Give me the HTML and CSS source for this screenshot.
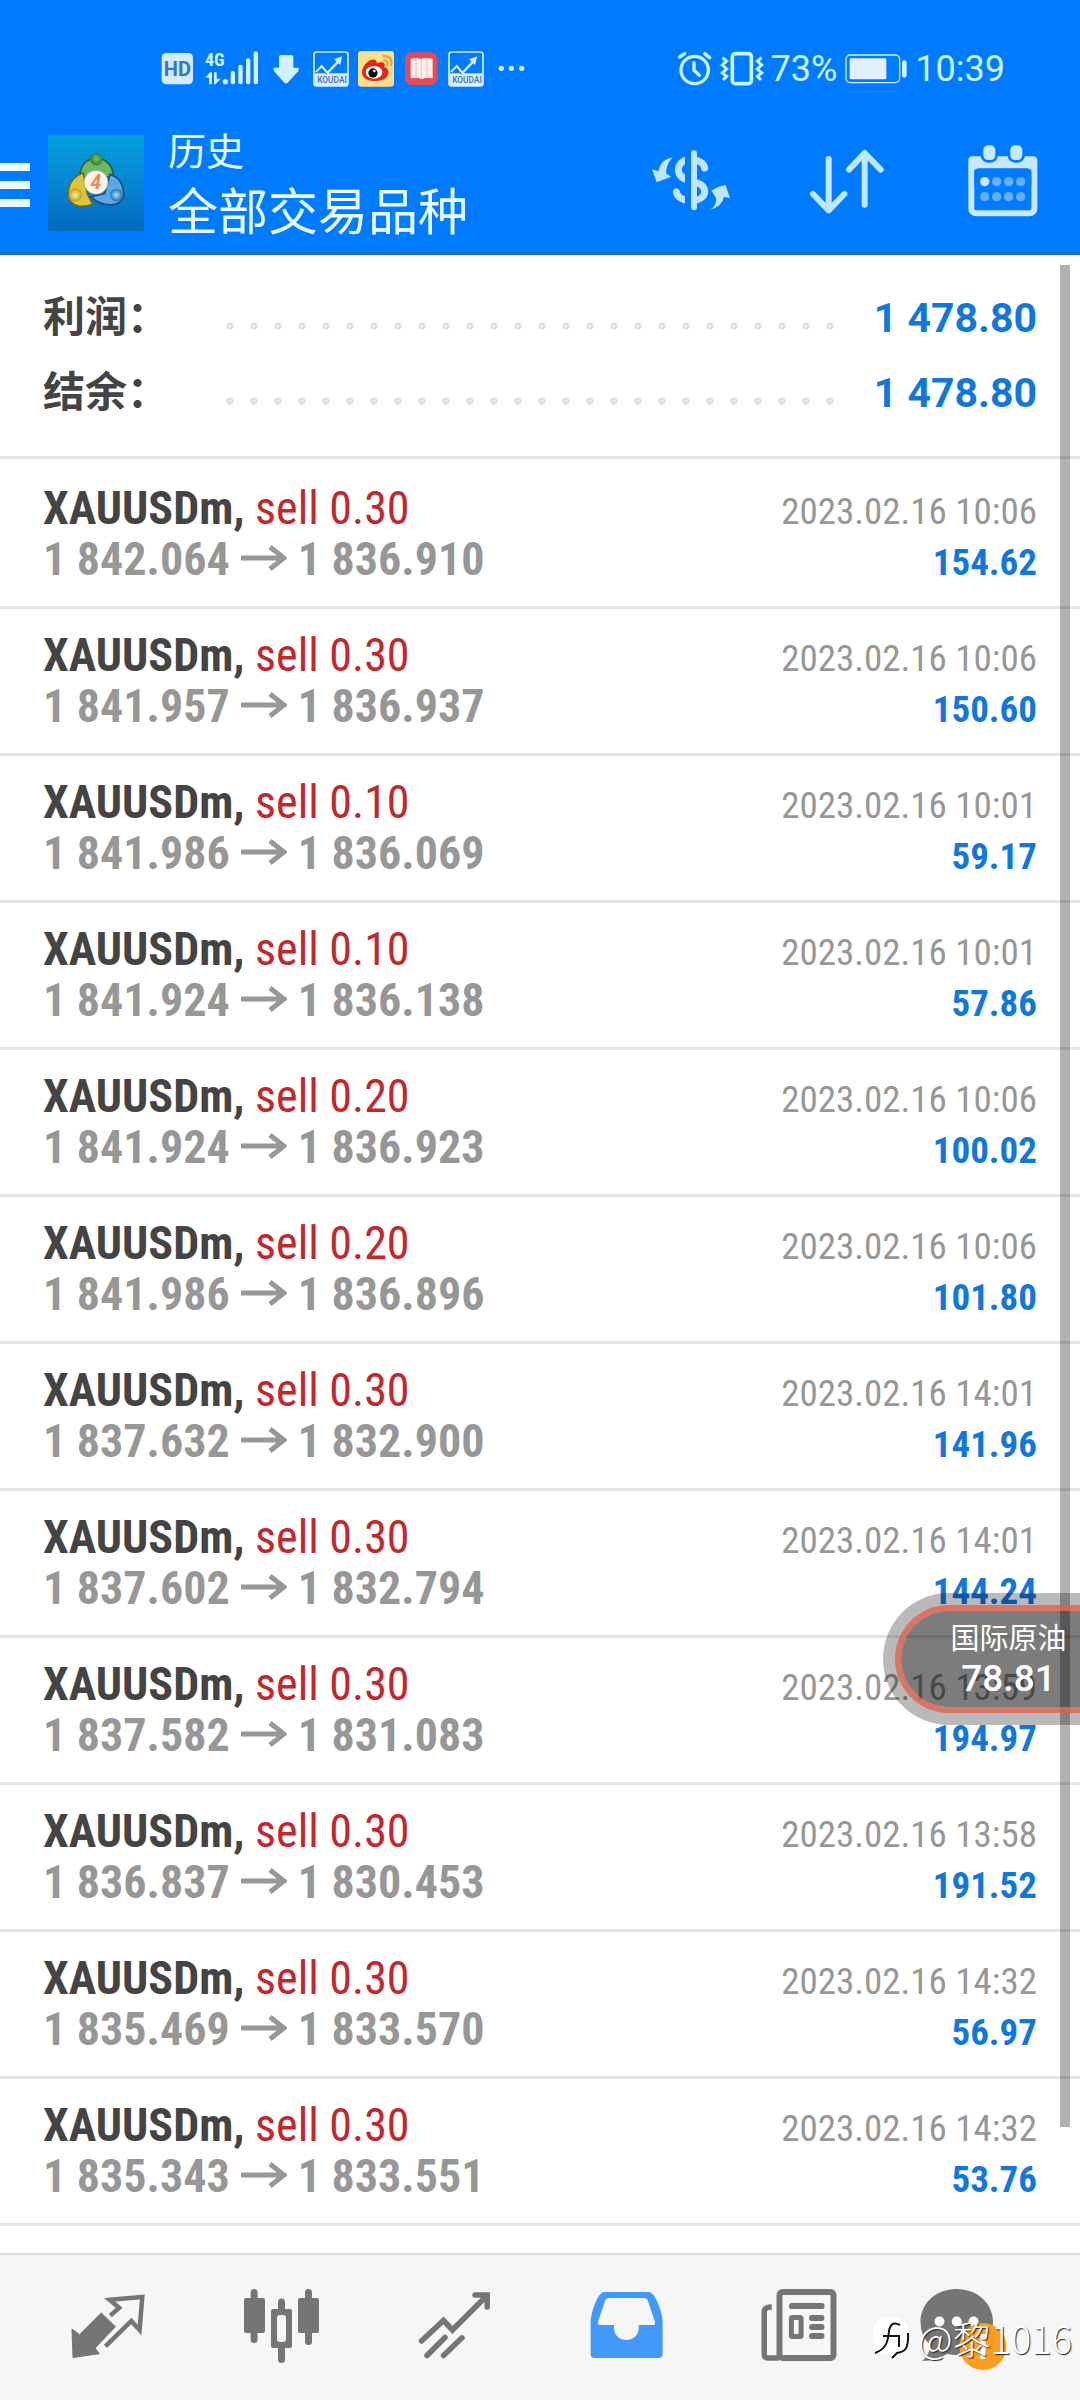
FILE: index.html
```html
<!DOCTYPE html>
<html lang="zh-CN">
<head>
<meta charset="utf-8">
<meta name="viewport" content="width=device-width, initial-scale=1">
<title>历史</title>
<link rel="stylesheet" href="styles.css">
</head>
<body>
<svg class="defs" aria-hidden="true">
  <symbol id="arrow" viewBox="0 0 46 34"><path d="M0 17H43M29 6L43 17L29 28" fill="none" stroke="currentColor" stroke-width="5"/></symbol>
  <symbol id="koudai" viewBox="519 62 108 108">
    <rect x="522" y="65" width="102" height="102" rx="8" fill="#007bff" stroke="#d8f1ff" stroke-width="5"/>
    <path d="M524 129H622V160Q622 167 615 167H531Q524 167 524 160Z" fill="#d8f1ff"/>
    <path d="M528 126L545 108L562 128L600 88" fill="none" stroke="#d8f1ff" stroke-width="7"/>
    <path d="M528 129L545 114L560 133" fill="none" stroke="#3d5f92" stroke-width="3"/>
    <path d="M607 78L600 104L582 87Z" fill="#d8f1ff"/>
    <text x="576" y="157" text-anchor="middle" class="koudai-text">KOUDAI</text>
  </symbol>
</svg>
<div class="app">
  <header class="header">
    <div class="status">
      <div class="status-left">
        <svg width="36" height="36" viewBox="60 62 108 108"><rect x="65" y="68" width="94" height="94" rx="14" fill="#d3ecff"/><text x="112" y="137" text-anchor="middle" class="hd-text">HD</text></svg>
        <svg width="56" height="36" viewBox="195 62 168 108" fill="#d3f0ff"><text x="195" y="107" class="net-text">4G</text><path d="M196 142L210 126H216V162H207V142ZM222 126H230V145H243L226 162H222Z"/><circle cx="256" cy="154" r="8"/><rect x="272" y="122" width="13" height="40" rx="6"/><rect x="295" y="103" width="13" height="59" rx="6"/><rect x="318" y="84" width="13" height="78" rx="6"/><rect x="341" y="63" width="13" height="99" rx="6"/></svg>
        <svg width="34" height="36" viewBox="390 62 102 108"><path d="M423 74H454Q460 74 460 80V112H476V121L443 157Q438 161 433 157L401 121V112H417V80Q417 74 423 74Z" fill="#d3f0ff"/></svg>
        <svg width="36" height="36"><use href="#koudai"/></svg>
        <svg width="36" height="36" viewBox="654 62 108 108"><rect x="654" y="62" width="108" height="107" rx="10" fill="#fbe08a"/><path d="M666 127C666 104 690 84 704 88C712 91 710 99 710 99C728 92 738 98 733 110C752 116 750 140 728 148C700 158 668 150 666 127Z" fill="#e1261d"/><ellipse cx="702" cy="126" rx="25" ry="19" fill="#fff"/><circle cx="699" cy="128" r="14" fill="#111"/><circle cx="703" cy="122" r="4" fill="#fff"/><path d="M730 90Q746 90 742 107M728 77Q760 76 753 107" fill="none" stroke="#e8a33c" stroke-width="7"/></svg>
        <svg width="36" height="36" viewBox="789 62 108 108"><rect x="795" y="66" width="98" height="98" rx="20" fill="#e34b5b"/><path d="M812 86Q830 80 843 86Q858 80 878 86V144Q858 140 845 147Q830 140 812 144Z" fill="#fff0ee"/><path d="M844 87V146M828 84V140M861 84V140" stroke="#f3b9b9" stroke-width="3"/></svg>
        <svg width="36" height="36"><use href="#koudai"/></svg>
        <svg width="36" height="36" viewBox="1059 62 108 108" fill="#d3f0ff"><circle cx="1084" cy="114" r="8"/><circle cx="1114" cy="114" r="8"/><circle cx="1145" cy="114" r="8"/></svg>
      </div>
      <div class="status-right">
        <svg width="36" height="36" viewBox="45 62 108 108" fill="none" stroke="#c9f3ff" stroke-width="10" stroke-linecap="round"><circle cx="98" cy="119" r="41"/><path d="M96 97V120L112 135M53 80L68 70M128 70L143 82"/></svg>
        <svg width="44" height="36" viewBox="180 62 132 108" fill="none" stroke="#c9f3ff"><rect x="217" y="70" width="57" height="90" rx="9" stroke-width="11"/><path d="M187 82L200 92L187 104L200 116L187 128L200 138L189 149M305 82L292 92L305 104L292 116L305 128L292 138L303 149" stroke-width="9"/></svg>
        <span class="status-text">73%</span>
        <svg width="64" height="36" viewBox="549 62 192 108"><rect x="555" y="74" width="161" height="83" rx="13" fill="none" stroke="#c9f3ff" stroke-width="4"/><rect x="566" y="84" width="110" height="63" rx="4" fill="#e4f0ff"/><rect x="723" y="90" width="14" height="52" rx="7" fill="#c9f3ff"/></svg>
        <span class="status-text">10:39</span>
      </div>
    </div>
    <div class="appbar">
      <button class="menu" aria-label="菜单"><i></i><i></i><i></i></button>
      <svg class="logo" viewBox="0 0 288 288">
        <defs>
          <linearGradient id="bg" x1="0" y1="0" x2="0" y2="1"><stop offset="0" stop-color="#05a3de"/><stop offset=".5" stop-color="#0787d4"/><stop offset="1" stop-color="#0368bd"/></linearGradient>
          <radialGradient id="gr"><stop offset="0" stop-color="#7fc46a"/><stop offset="1" stop-color="#2c7f35"/></radialGradient>
          <radialGradient id="ye"><stop offset="0" stop-color="#fff3a0"/><stop offset="1" stop-color="#c39a1c"/></radialGradient>
          <radialGradient id="bl"><stop offset="0" stop-color="#a9dcff"/><stop offset="1" stop-color="#1f73bd"/></radialGradient>
          <pattern id="grid" width="12" height="12" patternUnits="userSpaceOnUse"><path d="M0 0H12M0 0V12" stroke="#0a6fb5" stroke-opacity=".35" stroke-width="2"/></pattern>
        </defs>
        <rect width="288" height="288" fill="url(#bg)"/><rect width="288" height="288" fill="url(#grid)"/>
        <path d="M97 128C93 92 116 70 145 70C176 70 198 95 195 128L170 125L145 112L118 124Z" fill="#6fb765" stroke="#235f3a" stroke-width="5"/>
        <path d="M106 114C70 125 57 155 62 188C70 214 102 220 134 208L118 176Z" fill="#dcc53a" stroke="#6b6a25" stroke-width="5"/>
        <path d="M186 118C216 126 230 155 226 188C214 214 168 220 128 186L170 176Z" fill="#58a9e2" stroke="#174f87" stroke-width="5"/>
        <circle cx="145" cy="72" r="19" fill="url(#gr)"/><circle cx="82" cy="180" r="20" fill="url(#ye)"/><circle cx="205" cy="180" r="19" fill="url(#bl)"/>
        <circle cx="144" cy="142" r="36" fill="#fdf6ef" stroke="#8a9a76" stroke-width="2"/>
        <text x="144" y="163" text-anchor="middle" class="logo-text">4</text>
      </svg>
      <div class="titles">
        <p class="title-small">历史</p>
        <h1 class="title">全部交易品种</h1>
      </div>
      <div class="actions">
        <button aria-label="货币"><svg width="80" height="80" viewBox="90 62 240 240"><path d="M251 146C247 114 172 108 172 153C172 180 210 184 225 190C250 196 256 215 247 230C232 250 172 250 166 218" fill="none" stroke="#bfe6ff" stroke-width="21" stroke-linecap="round"/><path d="M192 85H210V280H192Z" fill="#007bff"/><rect x="210" y="93" width="18" height="180" rx="9" fill="#bfe6ff"/><path d="M155 114Q118 120 112 156L93 150L107 189L150 172L135 162Q136 134 155 114ZM265 272Q288 262 285 236L271 214L292 202L314 197L327 237L309 232Q304 262 265 272Z" fill="#bfe6ff"/></svg></button>
        <button aria-label="排序"><svg width="80" height="80" viewBox="559 62 240 240" fill="none" stroke="#bfe8ff" stroke-width="18" stroke-linecap="round" stroke-linejoin="round"><path d="M624 119V273M577 224L624 273L671 224M732 256V101M685 151L732 101L780 151"/></svg></button>
        <button aria-label="日期"><svg width="80" height="80" viewBox="1028 62 240 240"><rect x="1053" y="129" width="189" height="153" rx="14" fill="none" stroke="#c8e8ff" stroke-width="18"/><rect x="1044" y="111" width="207" height="40" rx="12" fill="#c8e8ff"/><path d="M1062 162Q1062 147 1077 147H1218Q1233 147 1233 162V200H1062Z" fill="#007bff"/><g fill="#c8e8ff" stroke="#007bff" stroke-width="8"><rect x="1085" y="74" width="44" height="52" rx="18"/><rect x="1166" y="74" width="44" height="52" rx="18"/></g><circle cx="1093" cy="187" r="14" fill="#c8e8ff"/><g fill="#63b0ff"><circle cx="1129" cy="187" r="14"/><circle cx="1165" cy="187" r="14"/><circle cx="1201" cy="187" r="14"/><circle cx="1093" cy="232" r="14"/><circle cx="1129" cy="232" r="14"/><circle cx="1165" cy="232" r="14"/><circle cx="1201" cy="232" r="14"/></g></svg></button>
      </div>
    </div>
  </header>

  <main class="main">
    <dl class="summary">
      <div class="sum-row"><dt>利润：</dt><dd class="leader" aria-hidden="true"></dd><dd class="sum-value">1 478.80</dd></div>
      <div class="sum-row"><dt>结余：</dt><dd class="leader" aria-hidden="true"></dd><dd class="sum-value">1 478.80</dd></div>
    </dl>
    <ul class="deals">
      <li class="deal"><p class="name"><b>XAUUSDm,</b> sell 0.30</p><time>2023.02.16 10:06</time><p class="price">1 842.064 <svg class="to"><use href="#arrow"/></svg> 1 836.910</p><p class="profit">154.62</p></li>
      <li class="deal"><p class="name"><b>XAUUSDm,</b> sell 0.30</p><time>2023.02.16 10:06</time><p class="price">1 841.957 <svg class="to"><use href="#arrow"/></svg> 1 836.937</p><p class="profit">150.60</p></li>
      <li class="deal"><p class="name"><b>XAUUSDm,</b> sell 0.10</p><time>2023.02.16 10:01</time><p class="price">1 841.986 <svg class="to"><use href="#arrow"/></svg> 1 836.069</p><p class="profit">59.17</p></li>
      <li class="deal"><p class="name"><b>XAUUSDm,</b> sell 0.10</p><time>2023.02.16 10:01</time><p class="price">1 841.924 <svg class="to"><use href="#arrow"/></svg> 1 836.138</p><p class="profit">57.86</p></li>
      <li class="deal"><p class="name"><b>XAUUSDm,</b> sell 0.20</p><time>2023.02.16 10:06</time><p class="price">1 841.924 <svg class="to"><use href="#arrow"/></svg> 1 836.923</p><p class="profit">100.02</p></li>
      <li class="deal"><p class="name"><b>XAUUSDm,</b> sell 0.20</p><time>2023.02.16 10:06</time><p class="price">1 841.986 <svg class="to"><use href="#arrow"/></svg> 1 836.896</p><p class="profit">101.80</p></li>
      <li class="deal"><p class="name"><b>XAUUSDm,</b> sell 0.30</p><time>2023.02.16 14:01</time><p class="price">1 837.632 <svg class="to"><use href="#arrow"/></svg> 1 832.900</p><p class="profit">141.96</p></li>
      <li class="deal"><p class="name"><b>XAUUSDm,</b> sell 0.30</p><time>2023.02.16 14:01</time><p class="price">1 837.602 <svg class="to"><use href="#arrow"/></svg> 1 832.794</p><p class="profit">144.24</p></li>
      <li class="deal"><p class="name"><b>XAUUSDm,</b> sell 0.30</p><time>2023.02.16 13:59</time><p class="price">1 837.582 <svg class="to"><use href="#arrow"/></svg> 1 831.083</p><p class="profit">194.97</p></li>
      <li class="deal"><p class="name"><b>XAUUSDm,</b> sell 0.30</p><time>2023.02.16 13:58</time><p class="price">1 836.837 <svg class="to"><use href="#arrow"/></svg> 1 830.453</p><p class="profit">191.52</p></li>
      <li class="deal"><p class="name"><b>XAUUSDm,</b> sell 0.30</p><time>2023.02.16 14:32</time><p class="price">1 835.469 <svg class="to"><use href="#arrow"/></svg> 1 833.570</p><p class="profit">56.97</p></li>
      <li class="deal"><p class="name"><b>XAUUSDm,</b> sell 0.30</p><time>2023.02.16 14:32</time><p class="price">1 835.343 <svg class="to"><use href="#arrow"/></svg> 1 833.551</p><p class="profit">53.76</p></li>
      <li class="deal"><p class="name"><b>XAUUSDm,</b> sell</p></li>
    </ul>
    <div class="scrollbar"></div>
  </main>

  <nav class="nav">
    <a href="#quotes" aria-label="行情"><svg viewBox="68 85 84 84"><path d="M103.3 113L117.4 126.7L97.1 148L101.2 153.7L75 157.5L74 129L81.6 134.7Z" fill="#757575" stroke="#757575" stroke-linejoin="round"/><path d="M112.3 115.7L121.2 107.7L111.6 99.7L144.3 97L141.6 130L133.3 121L107.4 146.3" fill="none" stroke="#757575" stroke-width="4.5"/></svg></a>
    <a href="#chart" aria-label="图表"><svg viewBox="239 85 84 84" fill="#757575"><rect x="250.6" y="89" width="7" height="54" rx="3.5"/><rect x="244" y="98" width="21" height="35" rx="2"/><rect x="278" y="98.5" width="7" height="64.5" rx="3.5"/><rect x="271" y="109" width="21" height="39" rx="2"/><rect x="277" y="115" width="9" height="27" rx="3" fill="#f6f6f6"/><rect x="305" y="89" width="7" height="56" rx="3.5"/><rect x="298" y="98" width="21" height="35" rx="2"/></svg></a>
    <a href="#trade" aria-label="交易"><svg viewBox="411 85 84 84" fill="none" stroke="#757575" stroke-width="5.5"><path d="M420.5 141L442.5 120.5L451.4 130L484 97.5" stroke-linecap="round"/><path d="M474 95H486.2V107" stroke-linecap="round"/><path d="M482 93L489 100V93Z" fill="#757575" stroke="none"/><path d="M426 155.5L444 137.5M442.5 155.5L461 137.8" stroke-linecap="round"/></svg></a>
    <a href="#history" aria-label="历史" aria-current="page"><svg viewBox="44 85 84 84"><path d="M64 92H109C115 92 122.6 112 122.6 123V154Q122.6 158 118.6 158H54.6Q50.6 158 50.6 154V123C50.6 112 58 92 64 92Z" fill="#4199fa"/><path d="M69 98H104Q107 98 108 101L115 122Q115.500 125 113 125H98.800V128C98.500 144 74 144 74 128V125H60Q57.500 125 58 122L65 101Q66 98 69 98Z" fill="#f6f6f6"/></svg></a>
    <a href="#news" aria-label="新闻"><svg viewBox="218 85 84 84" fill="#757575"><rect x="240.500" y="92" width="54" height="66" rx="3" fill="none" stroke="#757575" stroke-width="6"/><path d="M232.800 107Q225.200 107 225.200 112V154Q225.200 158 229 158H240" fill="none" stroke="#757575" stroke-width="5.500"/><rect x="250" y="103" width="35.500" height="6" rx="2.500"/><rect x="252.400" y="117.500" width="9.700" height="19" rx="1" fill="none" stroke="#757575" stroke-width="5"/><rect x="270" y="115" width="15.500" height="6" rx="3"/><rect x="270" y="124" width="15.500" height="6" rx="3"/><rect x="270" y="133" width="15.500" height="6" rx="3"/></svg></a>
    <a href="#messages" aria-label="消息"><svg viewBox="391 85 84 84"><path d="M417.700 89C438 89 454 103 454 122C454 141 438 155 417.700 155Q413 155 408 154Q397 161 383 161Q391 155 391 145Q381.500 136 381.500 122C381.500 103 397 89 417.700 89Z" fill="#757575"/><g fill="#fff"><circle cx="400.500" cy="121.500" r="5"/><circle cx="417.700" cy="121.500" r="5"/><circle cx="434.600" cy="121.500" r="5"/></g><circle cx="443.900" cy="146.500" r="23.500" fill="#fd9d20"/><rect x="441.400" y="134" width="5" height="25" fill="#fff"/></svg></a>
  </nav>

  <aside class="ticker"><div class="ticker-inner"><span>国际原油</span><strong>78.81</strong></div></aside>
  <div class="watermark">
    <svg width="38" height="44" viewBox="0 0 38 44"><path d="M1 22C1 8 5 1 19 1C33 1 37 8 37 20C37 34 32 36 25 37L20 42L16 37L2 36L8 30Q1 30 1 22Z" fill="#fff"/><path d="M28 9C20 5 18 10 17 15C16 26 14 33 3 37M11 20H27V31M36 17C37 34 32 36 25 37L20 42" fill="none" stroke="#111" stroke-width="2"/></svg>
    <span>@黎1016</span>
  </div>
</div>
</body>
</html>
```
FILE: styles.css
```css
* { box-sizing: border-box; margin: 0; padding: 0; }

body {
  background: #fff;
  color: #444;
  font-family: Roboto, "Noto Sans CJK SC", sans-serif;
}

button { background: none; border: 0; display: block; }
svg { display: block; flex: none; }
.defs { position: absolute; width: 0; height: 0; }

.app {
  position: relative;
  display: flex;
  flex-direction: column;
  height: 100vh;
  overflow: hidden;
}

/* header */
.header { background: #007bff; border-bottom: 3px solid #1a6dc4; color: #e8fbff; }

.status {
  display: flex;
  justify-content: space-between;
  padding: 51px 75px 27px 160px;
}
.status-left { display: flex; gap: 9px; }
.status-right { display: flex; align-items: center; gap: 7px; }
.status-text { font-size: 36px; line-height: 36px; color: #c9f3ff; }
.hd-text { font: 700 60px Roboto, sans-serif; fill: #2f78c4; }
.net-text { font: 700 54px "Roboto Condensed", sans-serif; }
.koudai-text { font: 500 25px Roboto, sans-serif; fill: #3b6fb5; }
.logo-text { font: italic 700 58px Roboto, sans-serif; fill: #ee8a4a; }

.appbar { display: flex; align-items: center; height: 138px; padding-right: 37px; }
.menu { display: flex; flex-direction: column; gap: 10px; width: 48px; padding-top: 4px; }
.menu i { width: 30px; height: 8px; background: #e8fbff; }
.logo { width: 96px; height: 96px; }
.titles { flex: 1; padding: 8px 0 0 24px; }
.title-small { font-size: 38px; line-height: 52px; }
.title { font-size: 50px; line-height: 70px; font-weight: 400; }
.actions { display: flex; gap: 76px; margin-bottom: 6px; }

/* history */
.main { position: relative; flex: 1; min-height: 0; overflow: hidden; }

.summary { padding: 25px 43px 26px; border-bottom: 3px solid #e4e4e4; }
.sum-row { display: flex; align-items: baseline; height: 75px; line-height: 75px; font-weight: 700; }
.sum-row dt { width: 175px; font-size: 42px; }
.leader {
  flex: 1;
  align-self: center;
  height: 10px;
  margin: 16px 32px 0 0;
  background: radial-gradient(circle, #ececec 0 1px, #d9d9d9 3px, transparent 4px) 0 0 / 24px 10px repeat-x;
}
.sum-value { font-size: 41px; color: #1277dd; }

.deals { list-style: none; padding-top: 3px; font-family: "Roboto Condensed", Roboto, sans-serif; }
.deal {
  display: grid;
  grid-template-columns: 1fr auto;
  grid-auto-rows: 51px;
  align-items: baseline;
  padding: 21px 43px;
  border-bottom: 3px solid #e4e4e4;
  line-height: 51px;
}
.name { font-size: 46px; color: #c1272d; }
.name b { color: #444; }
.price { display: flex; align-items: baseline; gap: 11px; font-size: 46px; font-weight: 700; color: #979797; }
.to { width: 46px; height: 34px; }
.deal time { font-size: 37px; color: #979797; text-align: right; }
.profit { font-size: 37px; font-weight: 700; color: #1277dd; text-align: right; }

.scrollbar {
  position: absolute;
  top: 10px;
  right: 10px;
  bottom: 126px;
  width: 10px;
  background: rgba(0, 0, 0, .3);
}

/* bottom tabs */
.nav {
  display: flex;
  padding: 0 22px;
  background: #f6f6f6;
  border-top: 2px solid #dcdcdc;
}
.nav a { flex: 1; display: flex; justify-content: center; padding: 30px 0 31px; }
.nav svg { width: 84px; height: 84px; overflow: visible; }

/* floating quote */
.ticker {
  position: absolute;
  top: 1593px;
  right: 0;
  padding: 12px 0 12px 12px;
  border-radius: 66px 0 0 66px;
  background: rgba(0, 0, 0, .27);
}
.ticker-inner {
  display: flex;
  flex-direction: column;
  align-items: center;
  width: 185px;
  height: 108px;
  padding: 8px 8px 0 44px;
  border: 6px solid rgba(226, 94, 74, .75);
  border-right: 0;
  border-radius: 54px 0 0 54px;
  background: rgba(0, 0, 0, .33);
  background-clip: padding-box;
  color: #fff;
}
.ticker span { font-size: 29px; line-height: 40px; }
.ticker strong { font-size: 37px; line-height: 40px; font-weight: 500; }

.watermark {
  position: absolute;
  right: 8px;
  bottom: 36px;
  display: flex;
  align-items: center;
  gap: 8px;
  font-family: "Noto Sans CJK SC", sans-serif;
  font-weight: 300;
  font-size: 38px;
  line-height: 52px;
  color: #fff;
  text-shadow: 1px 1px 1px #222;
}
```
